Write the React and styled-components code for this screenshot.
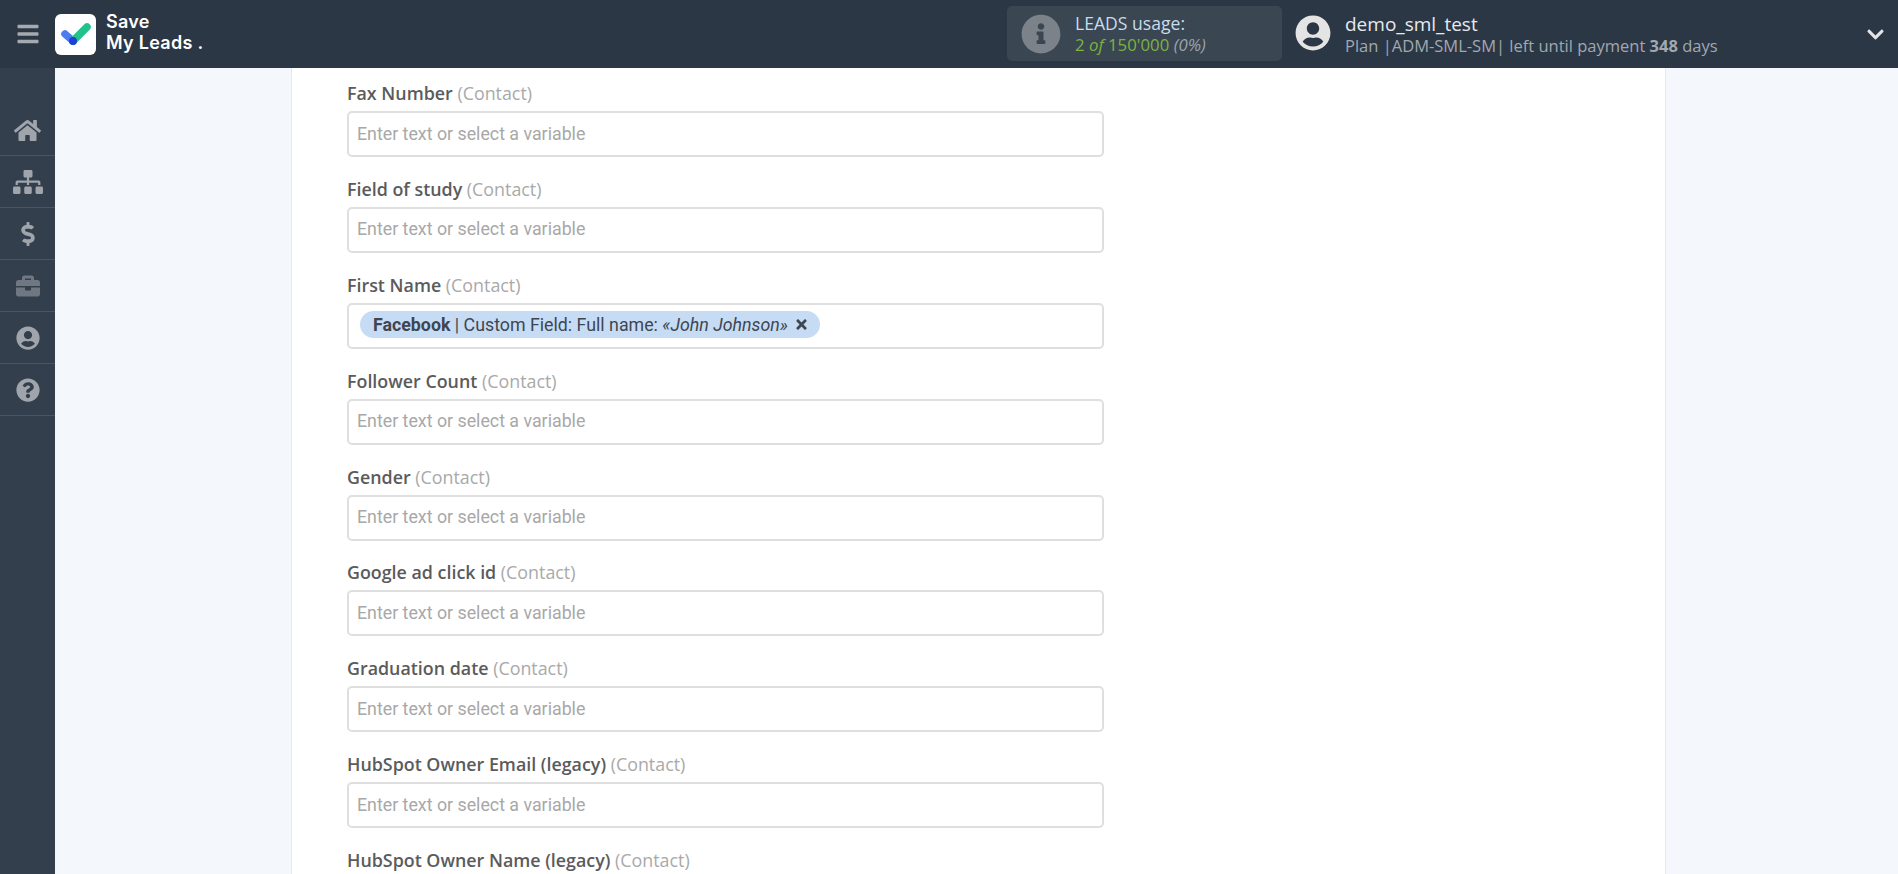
import React from "react";
import styled, { createGlobalStyle } from "styled-components";
import {
  FaBars,
  FaBriefcase,
  FaChevronDown,
  FaDollarSign,
  FaHome,
  FaInfoCircle,
  FaQuestionCircle,
  FaSitemap,
  FaTimes,
  FaUserCircle,
} from "react-icons/fa";

const GlobalStyle = createGlobalStyle`
  html, body {
    margin: 0;
    height: 874px;
    overflow: hidden;
    background: #f4f7fc;
    font-family: "Open Sans", "Liberation Sans", sans-serif;
  }
`;

const Page = styled.div`
  display: flex;
  flex-direction: column;
  height: 874px;
  overflow: hidden;
`;

const Header = styled.header`
  flex: none;
  display: flex;
  align-items: center;
  height: 68px;
  background: #2c3745;
`;

const Burger = styled.div`
  display: flex;
  justify-content: center;
  width: 55px;
  color: #a5a9b0;
  font-size: 24px;
`;

const LogoBox = styled.div`
  display: flex;
  align-items: center;
  justify-content: center;
  width: 41px;
  height: 41px;
  border-radius: 6px;
  background: #fff;
`;

const LogoText = styled.div`
  margin-left: 10px;
  padding-bottom: 5px;
  width: 901px;
  color: #fff;
  font-family: Inter, "Liberation Sans", sans-serif;
  font-size: 18px;
  font-weight: 600;
  line-height: 21px;
  letter-spacing: 0.3px;
`;

const UsageBox = styled.div`
  display: flex;
  align-items: center;
  width: 275px;
  height: 55px;
  margin-bottom: 1px;
  border-radius: 5px;
  background: #3a4652;
`;

const UsageIcon = styled.div`
  display: flex;
  margin-left: 14px;
  color: #7b8289;
  font-size: 40px;
`;

const UsageText = styled.div`
  margin-left: 14px;
  font-size: 17.6px;
  line-height: 22px;
  color: #c7ddea;
`;

const UsageCount = styled.div`
  color: #7cb342;
  font-size: 16.8px;
`;

const Muted = styled.em`
  color: #9aa3ab;
`;

const Avatar = styled.div`
  display: flex;
  margin: 0 0 2px 13px;
  color: #e4e4e4;
  font-size: 36px;
`;

const UserInfo = styled.div`
  margin-left: 14px;
  flex: 1;
`;

const UserName = styled.div`
  color: #e6eaee;
  font-size: 19px;
  line-height: 24px;
`;

const UserPlan = styled.div`
  color: #a0a8b0;
  font-size: 16.5px;
  line-height: 20px;
`;

const Chevron = styled.div`
  display: flex;
  margin-right: 13px;
  color: #e4e4e4;
  font-size: 19px;
`;

const Body = styled.div`
  flex: 1;
  display: flex;
  min-height: 0;
`;

const Sidebar = styled.nav`
  flex: none;
  width: 55px;
  padding-top: 36px;
  background: #343f4e;
`;

const NavItem = styled.div`
  display: flex;
  align-items: center;
  justify-content: center;
  box-sizing: border-box;
  height: 52px;
  padding-top: ${(props) => props.$nudge || 0}px;
  border-bottom: 1px solid #4a5563;
  color: ${(props) => (props.$dim ? "#6f7783" : "#a0a5ac")};
  font-size: ${(props) => props.$size || 24}px;
`;

const Main = styled.main`
  flex: 1;
  display: flex;
  padding: 0 232px 0 236px;
  overflow: hidden;
`;

const Card = styled.section`
  flex: 1;
  padding: 14px 55px 0;
  background: #fff;
  border-left: 1px solid #e8eaf2;
  border-right: 1px solid #e8eaf2;
`;

const Field = styled.div`
  width: 757px;
  margin-bottom: 20.9px;
`;

const Label = styled.div`
  height: 22px;
  margin-bottom: 7px;
  color: #5b5b5b;
  font-size: 17.85px;
  font-weight: 600;
  line-height: 22px;
  white-space: nowrap;
`;

const LabelHint = styled.span`
  color: #a9a9a9;
  font-weight: 400;
`;

const InputBox = styled.div`
  display: flex;
  align-items: center;
  box-sizing: border-box;
  height: 46px;
  padding: 0 8px 2px;
  border: 2px solid #dfdfdf;
  border-radius: 5px;
  background: #fff;
  font-family: Roboto, "Liberation Sans", sans-serif;
  font-size: 17.8px;
`;

const Placeholder = styled.span`
  color: #a8a8a8;
`;

const Tag = styled.div`
  display: flex;
  align-items: center;
  gap: 6px;
  height: 27px;
  margin-left: 3px;
  padding: 0 11px 0 13px;
  border-radius: 14px;
  background: #c6dcf5;
  color: #3f4650;
  white-space: nowrap;
`;

const TagClose = styled.span`
  display: flex;
  font-size: 15px;
`;

const CheckLogo = () => (
  <svg width="32" height="24" viewBox="0 0 32 24">
    <path d="M5 12 L13 19" stroke="#4a7df0" strokeWidth="7.5" strokeLinecap="round" />
    <path d="M13 19 L27 5" stroke="#21c38a" strokeWidth="7.5" strokeLinecap="round" />
    <circle cx="13" cy="19" r="4" fill="#1e3fd8" />
  </svg>
);

const FIELDS = [
  { name: "Fax Number" },
  { name: "Field of study" },
  { name: "First Name", tag: true },
  { name: "Follower Count" },
  { name: "Gender" },
  { name: "Google ad click id" },
  { name: "Graduation date" },
  { name: "HubSpot Owner Email (legacy)" },
  { name: "HubSpot Owner Name (legacy)" },
];

const NAV = [
  { icon: <FaHome />, size: 27, nudge: 2 },
  { icon: <FaSitemap />, size: 30 },
  { icon: <FaDollarSign /> },
  { icon: <FaBriefcase />, dim: true },
  { icon: <FaUserCircle /> },
  { icon: <FaQuestionCircle /> },
];

export default function App() {
  return (
    <Page>
      <GlobalStyle />
      <Header>
        <Burger>
          <FaBars />
        </Burger>
        <LogoBox>
          <CheckLogo />
        </LogoBox>
        <LogoText>
          Save
          <br />
          My Leads .
        </LogoText>
        <UsageBox>
          <UsageIcon>
            <FaInfoCircle />
          </UsageIcon>
          <UsageText>
            LEADS usage:
            <UsageCount>
              2 <em>of</em> 150'000 <Muted>(0%)</Muted>
            </UsageCount>
          </UsageText>
        </UsageBox>
        <Avatar>
          <FaUserCircle />
        </Avatar>
        <UserInfo>
          <UserName>demo_sml_test</UserName>
          <UserPlan>
            Plan |ADM-SML-SM| left until payment <b>348</b> days
          </UserPlan>
        </UserInfo>
        <Chevron>
          <FaChevronDown />
        </Chevron>
      </Header>
      <Body>
        <Sidebar>
          {NAV.map((item, i) => (
            <NavItem key={i} $size={item.size} $dim={item.dim} $nudge={item.nudge}>
              {item.icon}
            </NavItem>
          ))}
        </Sidebar>
        <Main>
          <Card>
            {FIELDS.map((field) => (
              <Field key={field.name}>
                <Label>
                  {field.name} <LabelHint>(Contact)</LabelHint>
                </Label>
                <InputBox>
                  {field.tag ? (
                    <Tag>
                      <span>
                        <b>Facebook</b> | Custom Field: Full name: <em>«John Johnson»</em>
                      </span>
                      <TagClose>
                        <FaTimes />
                      </TagClose>
                    </Tag>
                  ) : (
                    <Placeholder>Enter text or select a variable</Placeholder>
                  )}
                </InputBox>
              </Field>
            ))}
          </Card>
        </Main>
      </Body>
    </Page>
  );
}
